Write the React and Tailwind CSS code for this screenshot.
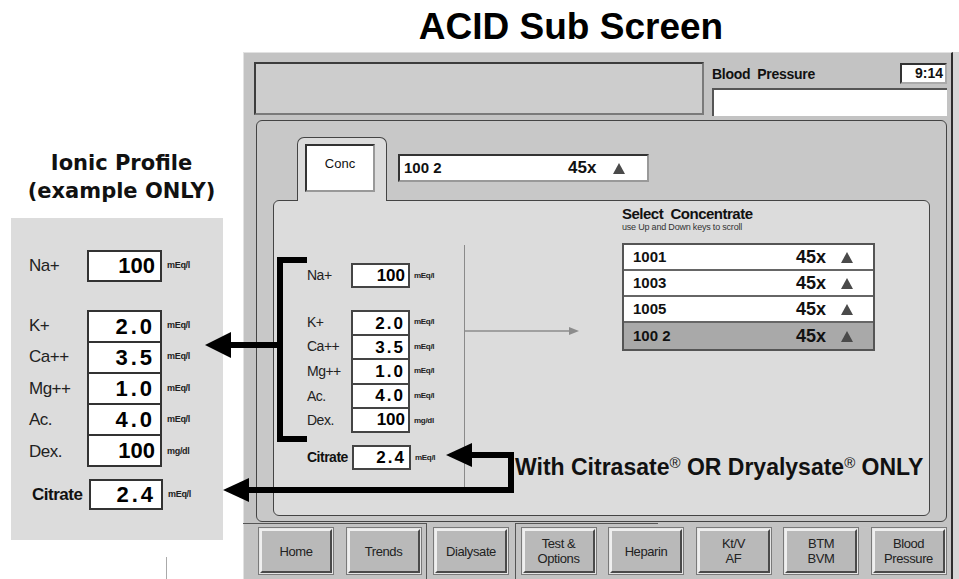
import React from 'react';

const SANS = "font-['Liberation_Sans',Arial,sans-serif]";
const DEJAVU = "font-['DejaVu_Sans',sans-serif]";

const ions = [
  ['K+', '2.0', 'mEq/l'],
  ['Ca++', '3.5', 'mEq/l'],
  ['Mg++', '1.0', 'mEq/l'],
  ['Ac.', '4.0', 'mEq/l'],
  ['Dex.', '100', 'mg/dl'],
];

const concentrates = [
  { no: '1001', on: false },
  { no: '1003', on: false },
  { no: '1005', on: false },
  { no: '100 2', on: true },
];

const buttons = [
  ['Home'],
  ['Trends'],
  ['Dialysate'],
  ['Test &', 'Options'],
  ['Heparin'],
  ['Kt/V', 'AF'],
  ['BTM', 'BVM'],
  ['Blood', 'Pressure'],
];

function Tri() {
  return (
    <svg width="12" height="11" viewBox="0 0 12 11">
      <polygon points="6,0 12,11 0,11" fill="#4a4a4a" />
    </svg>
  );
}

function LeftPanel() {
  return (
    <div className="w-[243px] shrink-0 pt-[149px]">
      <div className={`${DEJAVU} text-center text-[21px] leading-[28px] font-bold text-[#111]`}>
        Ionic Profile
        <br />
        (example ONLY)
      </div>
      <div className={`${SANS} mt-[13px] ml-[11px] w-[212px] h-[322px] bg-[#dcdcdc] pl-[18px] pt-[32px] text-[#222]`}>
        <div className="flex items-center h-[32px]">
          <span className="w-[58px] text-[17px] tracking-[-0.5px]">Na+</span>
          <div className="w-[75px] h-[32px] border-2 border-[#333] bg-white flex items-center justify-end pr-[5px] text-[22px] leading-none font-bold text-black">100</div>
          <span className="ml-[5px] text-[9px] font-bold tracking-[-0.3px]">mEq/l</span>
        </div>

        <div className="mt-[28px] flex">
          <div className="w-[58px] flex flex-col">
            {ions.map(([k]) => (
              <div key={k} className="h-[31.4px] flex items-center text-[17px] tracking-[-0.5px]">{k}</div>
            ))}
          </div>
          <div className="w-[75px] h-[157px] border-2 border-[#333] bg-white flex flex-col divide-y-2 divide-[#333]">
            {ions.map(([k, v]) => (
              <div key={k} className={`flex-1 min-h-0 flex items-center justify-end pr-[5px] text-[22px] leading-none font-bold text-black ${v === '100' ? '' : 'tracking-[3px]'}`}>{v}</div>
            ))}
          </div>
          <div className="ml-[5px] flex flex-col">
            {ions.map(([k, , u]) => (
              <div key={k} className="h-[31.4px] flex items-center text-[9px] font-bold tracking-[-0.3px]">{u}</div>
            ))}
          </div>
        </div>

        <div className="mt-[12px] flex items-center h-[31px]">
          <span className="ml-[3px] w-[57px] text-[17px] font-bold tracking-[-0.5px] text-[#111]">Citrate</span>
          <div className="w-[74px] h-[31px] border-2 border-[#333] bg-white flex items-center justify-end pr-[5px] text-[22px] leading-none font-bold text-black tracking-[3px]">2.4</div>
          <span className="ml-[5px] text-[9px] font-bold tracking-[-0.3px]">mEq/l</span>
        </div>
      </div>
      <div className="ml-[166px] mt-[17px] w-px h-[22px] bg-[#aaaaaa]" />
    </div>
  );
}

function TopRow() {
  return (
    <div className="flex h-[54px]">
      <div className="w-[450px] h-[53px] bg-[#cdcdcd] border-2 border-t-[#3c3c3c] border-l-[#3c3c3c] border-b-[#7a7a7a] border-r-[#7a7a7a]" />
      <div className="ml-[8px] w-[235px] flex flex-col">
        <div className="flex justify-between items-start h-[22px]">
          <span className={`${SANS} mt-[4px] text-[14px] leading-[16px] font-bold text-[#111] tracking-[-0.3px]`}>Blood&nbsp; Pressure</span>
          <div className={`${SANS} mt-[1px] w-[47px] h-[21px] bg-white border-2 border-t-[#333] border-l-[#333] border-b-[#aaa] border-r-[#aaa] text-right pr-[2px] text-[14px] leading-[17px] font-bold text-[#111]`}>9:14</div>
        </div>
        <div className="mt-[4px] h-[28px] bg-white border-t-2 border-l-2 border-[#555]" />
      </div>
    </div>
  );
}

function InnerPanel() {
  return (
    <div className="mt-[-1px] ml-[16px] w-[657px] h-[316px] rounded-[6px] border border-[#444] bg-[#dcdcdc] flex">
      <div className={`${SANS} mt-[44px] w-[191px] h-[245px] border-r border-[#8a8a8a] pl-[33px] pt-[18px] text-[#222]`}>
        <div className="flex items-center h-[25px]">
          <span className="w-[44px] text-[14px] tracking-[-0.5px]">Na+</span>
          <div className="w-[59px] h-[25px] border-2 border-[#444] bg-white flex items-center justify-end pr-[3px] text-[17px] leading-none font-bold text-black">100</div>
          <span className="ml-[4px] text-[8px] font-bold tracking-[-0.3px]">mEq/l</span>
        </div>

        <div className="mt-[22px] flex">
          <div className="w-[44px] flex flex-col">
            {ions.map(([k]) => (
              <div key={k} className="h-[24.6px] flex items-center text-[14px] tracking-[-0.5px]">{k}</div>
            ))}
          </div>
          <div className="w-[59px] h-[123px] border-2 border-[#444] bg-white flex flex-col divide-y-2 divide-[#444]">
            {ions.map(([k, v]) => (
              <div key={k} className={`flex-1 min-h-0 flex items-center justify-end pr-[3px] text-[17px] leading-none font-bold text-black ${v === '100' ? '' : 'tracking-[2px]'}`}>{v}</div>
            ))}
          </div>
          <div className="ml-[4px] flex flex-col">
            {ions.map(([k, , u]) => (
              <div key={k} className="h-[24.6px] flex items-center text-[8px] font-bold tracking-[-0.3px]">{u}</div>
            ))}
          </div>
        </div>

        <div className="mt-[12px] flex items-center h-[25px]">
          <span className="w-[45px] text-[14px] font-bold tracking-[-0.5px] text-[#111]">Citrate</span>
          <div className="w-[59px] h-[25px] border-2 border-[#444] bg-white flex items-center justify-end pr-[3px] text-[17px] leading-none font-bold text-black tracking-[2px]">2.4</div>
          <span className="ml-[4px] text-[8px] font-bold tracking-[-0.3px]">mEq/l</span>
        </div>
      </div>

      <div className="w-[157px] pt-[125px]">
        <svg width="116" height="10" viewBox="0 0 116 10">
          <line x1="0" y1="5" x2="106" y2="5" stroke="#8c8c8c" strokeWidth="1.5" />
          <polygon points="104,1 114,5 104,9" fill="#8c8c8c" />
        </svg>
      </div>

      <div className={`${SANS} pt-[4px] text-[#111]`}>
        <div className="text-[15px] leading-[17px] font-bold tracking-[-0.5px]">Select&nbsp; Concentrate</div>
        <div className="text-[9px] leading-[11px] text-[#333] tracking-[-0.2px]">use Up and Down keys to scroll</div>
        <div className="mt-[10px] w-[253px] border-2 border-[#555] flex flex-col divide-y-2 divide-[#666]">
          {concentrates.map((c) => (
            <div key={c.no} className={`h-[26px] flex items-center pl-[9px] ${c.on ? 'bg-[#a9a9a9]' : 'bg-white'}`}>
              <span className="w-[163px] text-[15px] font-bold">{c.no}</span>
              <span className="w-[45px] text-[18px] font-bold">45x</span>
              <Tri />
            </div>
          ))}
        </div>
      </div>
    </div>
  );
}

function MainPanel() {
  return (
    <div className="mt-[4px] ml-[2px] w-[691px] h-[402px] rounded-[6px] border border-[#444] bg-[#c8c8c8]">
      <div className="flex items-start ml-[40px] mt-[16px]">
        <div className="relative z-10 w-[90px] h-[64px] rounded-t-[7px] border border-b-0 border-[#444] bg-[#dcdcdc] pl-[7px] pt-[6px]">
          <div className={`${SANS} w-[70px] h-[48px] bg-white border-2 border-t-[#333] border-l-[#333] border-b-[#999] border-r-[#999] text-center pt-[10px] text-[13px] leading-[16px] text-[#111]`}>Conc</div>
        </div>
        <div className={`${SANS} ml-[11px] mt-[17px] w-[251px] h-[28px] bg-white border-2 border-t-[#333] border-l-[#333] border-b-[#999] border-r-[#999] flex items-center pl-[4px] text-[#111]`}>
          <span className="w-[164px] text-[15px] font-bold">100 2</span>
          <span className="w-[45px] text-[17px] font-bold">45x</span>
          <Tri />
        </div>
      </div>
      <InnerPanel />
    </div>
  );
}

function ButtonRow() {
  return (
    <div className="relative mt-[5px] ml-[4px] flex gap-[11.5px]">
      <div className="absolute left-[-15px] top-[-4px] w-[184px] h-px bg-[#555]" />
      <div className="absolute left-[168px] top-[-4px] w-px h-[60px] bg-[#555]" />
      <div className="absolute left-[257px] top-[-4px] w-[143px] h-px bg-[#555]" />
      <div className="absolute left-[257px] top-[-4px] w-px h-[60px] bg-[#555]" />
      {buttons.map((b) => (
        <div key={b.join(' ')} className="w-[76px] h-[48px] border border-[#7a7a7a] bg-[#e6e6e6] p-px">
          <div className={`${SANS} h-full flex flex-col items-center justify-center bg-[#b9b9b9] border-2 border-t-[#efefef] border-l-[#efefef] border-b-[#4a4a4a] border-r-[#4a4a4a] text-[13px] leading-[15px] tracking-[-0.4px] text-[#222]`}>
            {b.map((l) => (
              <span key={l}>{l}</span>
            ))}
          </div>
        </div>
      ))}
    </div>
  );
}

function Screen() {
  return (
    <div className="mt-[4px] flex h-[527px]">
      <div className="w-[710px] h-full bg-[#c3c3c3] border-l border-t border-[#e2e2e2] border-r-2 border-r-[#2e2e2e] pl-[10px] pt-[9px]">
        <TopRow />
        <MainPanel />
        <ButtonRow />
      </div>
      <div className="w-[6px] h-full bg-[#d6d6d6]" />
    </div>
  );
}

function Annotations() {
  return (
    <>
      <div className="absolute left-[277px] top-[257px] w-[30px] h-[185px] border-l-[6px] border-y-[6px] border-black" />
      <svg className="absolute left-0 top-0 pointer-events-none" width="959" height="579" viewBox="0 0 959 579">
        <path d="M228 345 H280" stroke="#000" strokeWidth="6" />
        <polygon points="205,345 231,332 231,358" fill="#000" />
        <path d="M468 455 H511 V490 H245" fill="none" stroke="#000" strokeWidth="6" />
        <polygon points="446,455 472,443 472,467" fill="#000" />
        <polygon points="223,490 249,478 249,502" fill="#000" />
      </svg>
      <div className={`${SANS} absolute left-[515px] top-[454px] text-[23px] leading-[26px] font-bold text-[#111] whitespace-nowrap`}>
        With Citrasate<sup className="text-[15px] font-normal">®</sup> OR Dryalysate<sup className="text-[15px] font-normal">®</sup> ONLY
      </div>
    </>
  );
}

export default function App() {
  return (
    <div className="relative w-[959px] h-[579px] overflow-hidden bg-white flex">
      <LeftPanel />
      <div className="flex flex-col w-[716px]">
        <div className={`${SANS} mt-[6px] mr-[60px] text-center text-[37px] leading-[42px] font-bold text-black`}>ACID Sub Screen</div>
        <Screen />
      </div>
      <Annotations />
    </div>
  );
}
